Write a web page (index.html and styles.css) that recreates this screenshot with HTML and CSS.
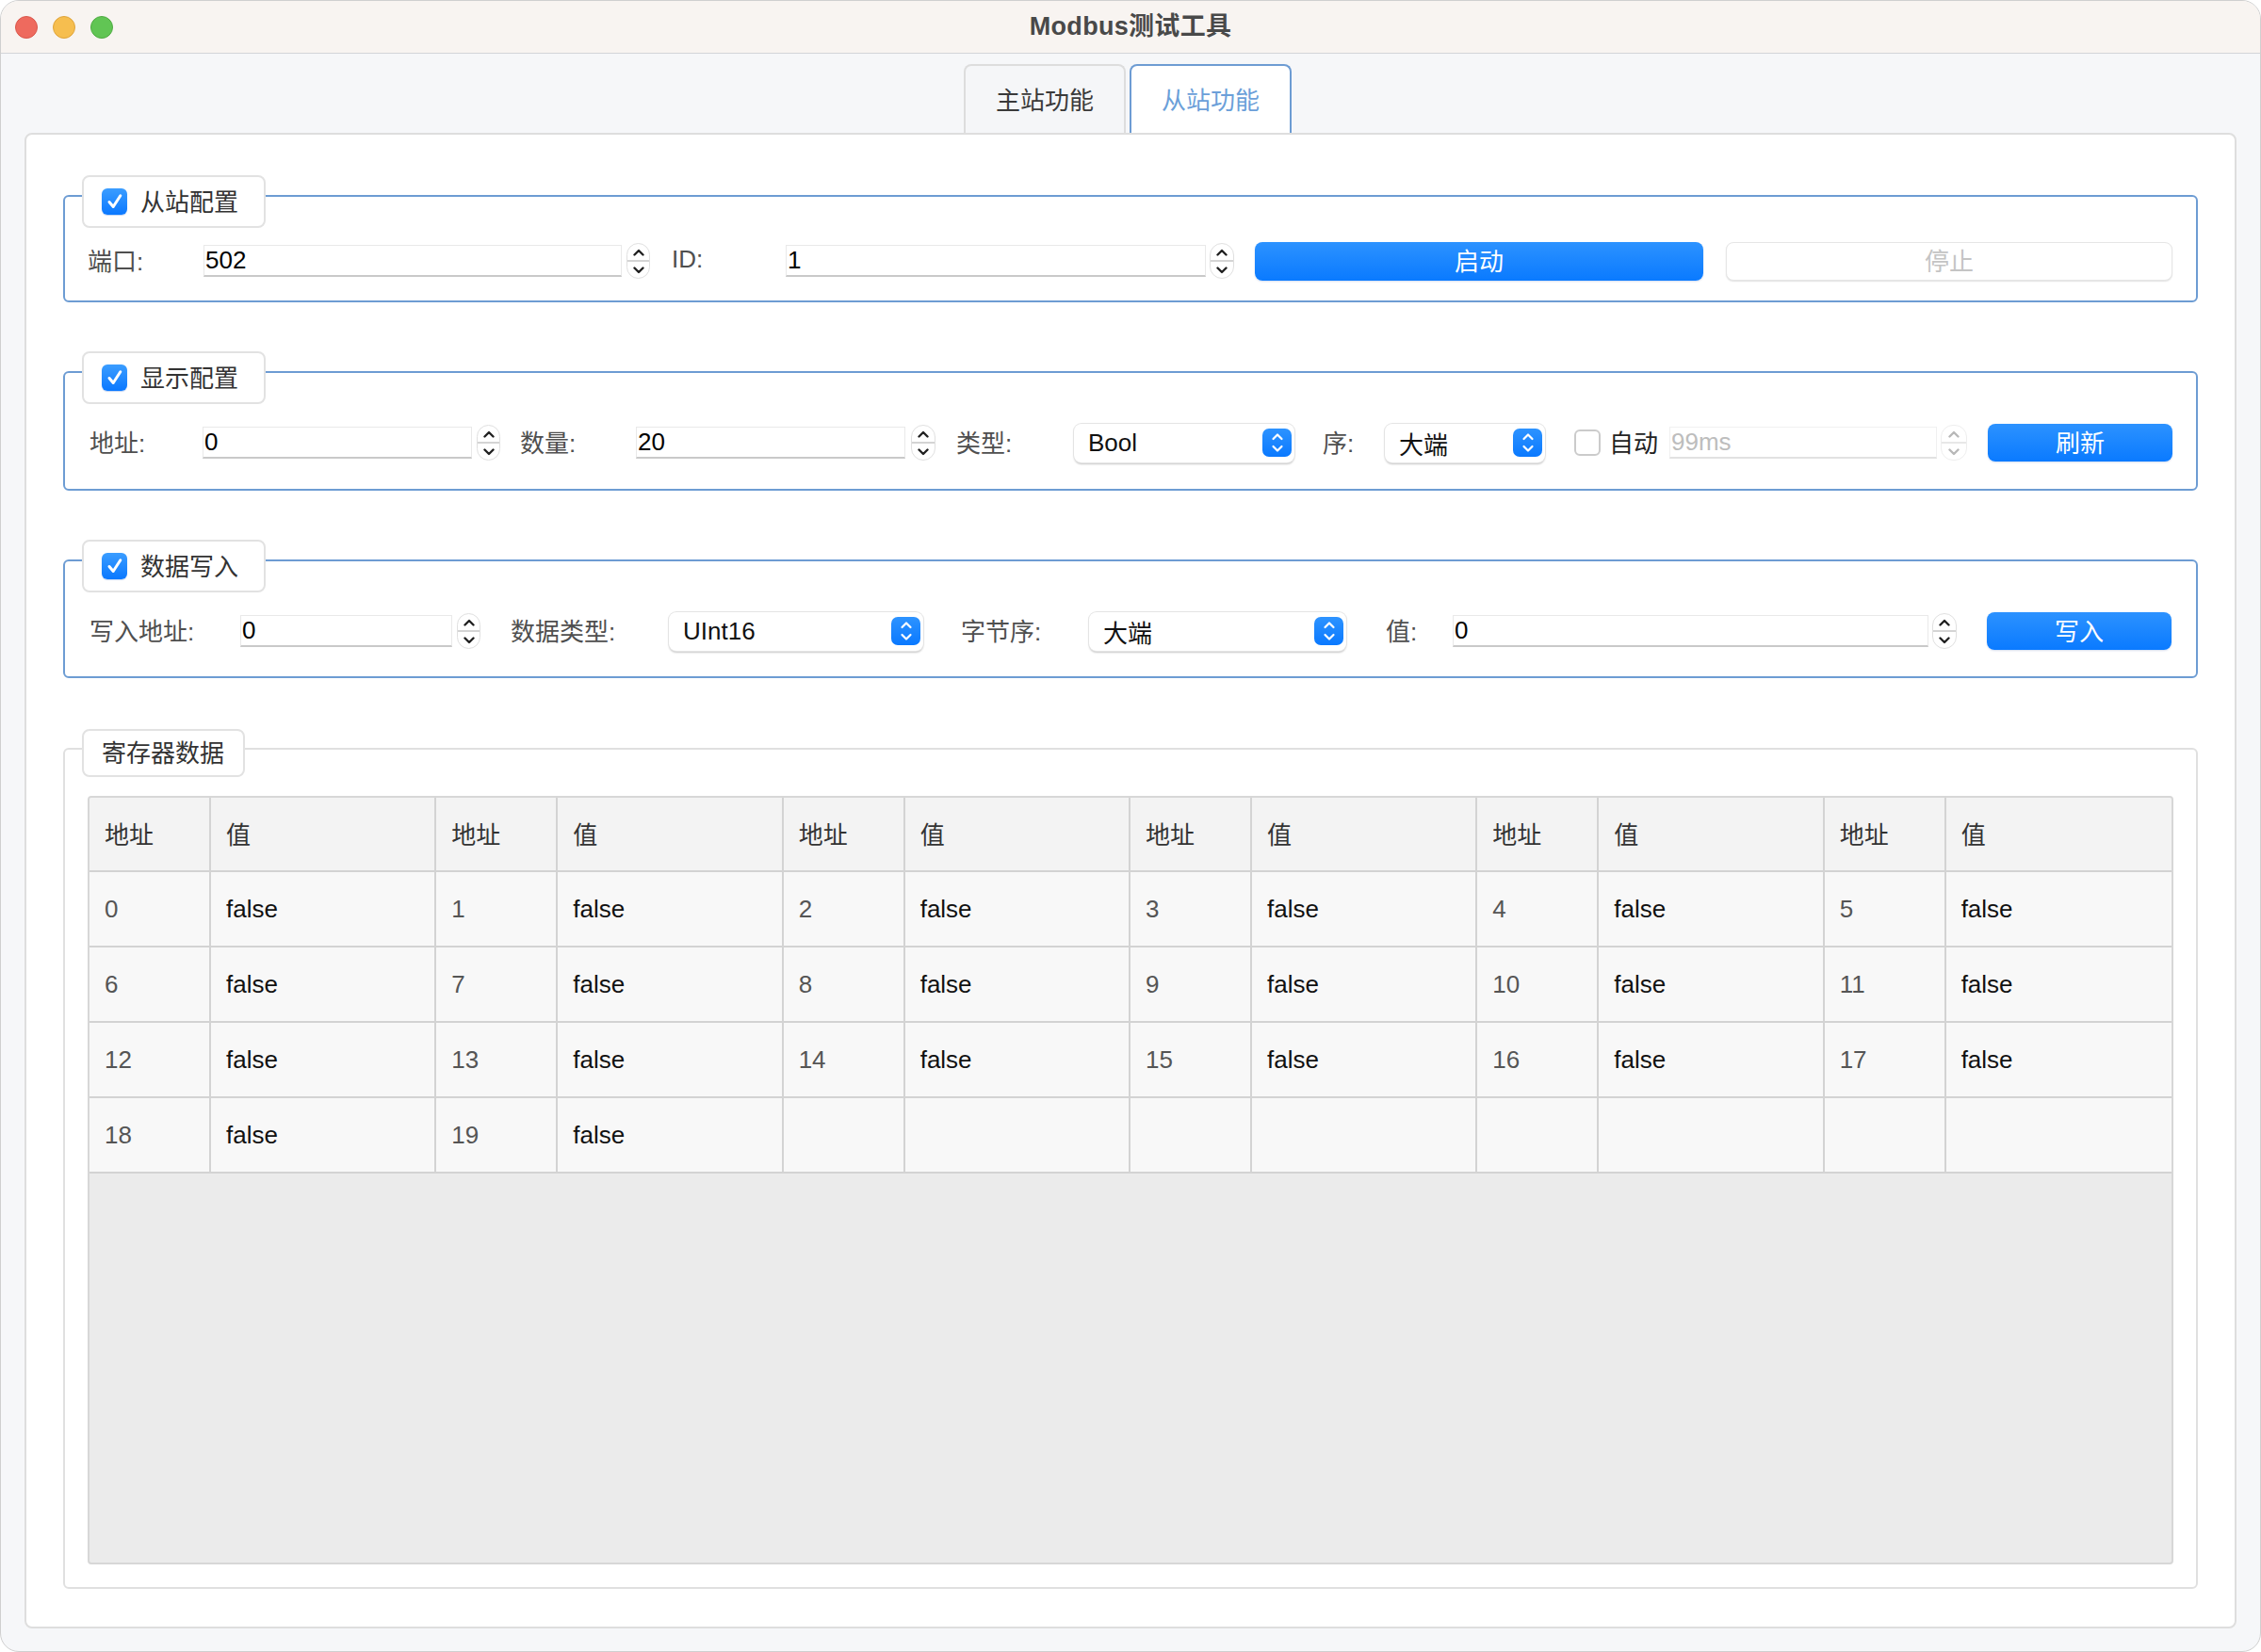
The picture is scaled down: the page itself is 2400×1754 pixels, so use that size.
FILE: index.html
```html
<!DOCTYPE html>
<html lang="zh-CN">
<head>
<meta charset="utf-8">
<title>Modbus测试工具</title>
<link rel="stylesheet" href="styles.css">
</head>
<body>
<div class="window">
  <header class="titlebar">
    <div class="lights"><span class="light red"></span><span class="light yellow"></span><span class="light green"></span></div>
    <div class="title">Modbus测试工具</div>
    <div class="spacer"></div>
  </header>
  <main class="content">
    <nav class="tabs">
      <div class="tab">主站功能</div>
      <div class="tab active">从站功能</div>
    </nav>
    <section class="panel">

      <div class="group blue g1">
        <div class="legend">
          <span class="check on"><svg width="20" height="20" viewBox="0 0 20 20"><path d="M4 10.5 L8.2 15.5 L15.8 3.8" fill="none" stroke="#fff" stroke-width="3" stroke-linecap="round" stroke-linejoin="round"/></svg></span>
          <span class="ltext">从站配置</span>
        </div>
        <div class="row r1">
          <span class="label l-port">端口:</span>
          <span class="input i-port">502</span>
          <span class="spin s-a"><span class="up"><svg width="12" height="8" viewBox="0 0 12 8"><path d="M1.5 6.5 L6 2 L10.5 6.5" fill="none" stroke="currentColor" stroke-width="2.4" stroke-linecap="round" stroke-linejoin="round"/></svg></span><span class="dn"><svg width="12" height="8" viewBox="0 0 12 8"><path d="M1.5 1.5 L6 6 L10.5 1.5" fill="none" stroke="currentColor" stroke-width="2.4" stroke-linecap="round" stroke-linejoin="round"/></svg></span></span>
          <span class="label l-id">ID:</span>
          <span class="input i-id">1</span>
          <span class="spin s-b"><span class="up"><svg width="12" height="8" viewBox="0 0 12 8"><path d="M1.5 6.5 L6 2 L10.5 6.5" fill="none" stroke="currentColor" stroke-width="2.4" stroke-linecap="round" stroke-linejoin="round"/></svg></span><span class="dn"><svg width="12" height="8" viewBox="0 0 12 8"><path d="M1.5 1.5 L6 6 L10.5 1.5" fill="none" stroke="currentColor" stroke-width="2.4" stroke-linecap="round" stroke-linejoin="round"/></svg></span></span>
          <span class="btn b-start">启动</span>
          <span class="btn disabled b-stop">停止</span>
        </div>
      </div>

      <div class="group blue g2">
        <div class="legend">
          <span class="check on"><svg width="20" height="20" viewBox="0 0 20 20"><path d="M4 10.5 L8.2 15.5 L15.8 3.8" fill="none" stroke="#fff" stroke-width="3" stroke-linecap="round" stroke-linejoin="round"/></svg></span>
          <span class="ltext">显示配置</span>
        </div>
        <div class="row r2">
          <span class="label l-addr">地址:</span>
          <span class="input i-addr">0</span>
          <span class="spin s-a"><span class="up"><svg width="12" height="8" viewBox="0 0 12 8"><path d="M1.5 6.5 L6 2 L10.5 6.5" fill="none" stroke="currentColor" stroke-width="2.4" stroke-linecap="round" stroke-linejoin="round"/></svg></span><span class="dn"><svg width="12" height="8" viewBox="0 0 12 8"><path d="M1.5 1.5 L6 6 L10.5 1.5" fill="none" stroke="currentColor" stroke-width="2.4" stroke-linecap="round" stroke-linejoin="round"/></svg></span></span>
          <span class="label l-count">数量:</span>
          <span class="input i-count">20</span>
          <span class="spin s-c"><span class="up"><svg width="12" height="8" viewBox="0 0 12 8"><path d="M1.5 6.5 L6 2 L10.5 6.5" fill="none" stroke="currentColor" stroke-width="2.4" stroke-linecap="round" stroke-linejoin="round"/></svg></span><span class="dn"><svg width="12" height="8" viewBox="0 0 12 8"><path d="M1.5 1.5 L6 6 L10.5 1.5" fill="none" stroke="currentColor" stroke-width="2.4" stroke-linecap="round" stroke-linejoin="round"/></svg></span></span>
          <span class="label l-type">类型:</span>
          <span class="combo c-bool"><span>Bool</span><span class="carrow"><svg width="14" height="26" viewBox="0 0 14 26"><path d="M2.5 9 L7 4.5 L11.5 9 M2.5 17 L7 21.5 L11.5 17" fill="none" stroke="#fff" stroke-width="2.2" stroke-linecap="round" stroke-linejoin="round"/></svg></span></span>
          <span class="label l-order">序:</span>
          <span class="combo c-order"><span>大端</span><span class="carrow"><svg width="14" height="26" viewBox="0 0 14 26"><path d="M2.5 9 L7 4.5 L11.5 9 M2.5 17 L7 21.5 L11.5 17" fill="none" stroke="#fff" stroke-width="2.2" stroke-linecap="round" stroke-linejoin="round"/></svg></span></span>
          <span class="check off"></span>
          <span class="label l-auto">自动</span>
          <span class="input dim i-ms">99ms</span>
          <span class="spin dim s-d"><span class="up"><svg width="12" height="8" viewBox="0 0 12 8"><path d="M1.5 6.5 L6 2 L10.5 6.5" fill="none" stroke="currentColor" stroke-width="2.4" stroke-linecap="round" stroke-linejoin="round"/></svg></span><span class="dn"><svg width="12" height="8" viewBox="0 0 12 8"><path d="M1.5 1.5 L6 6 L10.5 1.5" fill="none" stroke="currentColor" stroke-width="2.4" stroke-linecap="round" stroke-linejoin="round"/></svg></span></span>
          <span class="btn small b-refresh">刷新</span>
        </div>
      </div>

      <div class="group blue g3">
        <div class="legend">
          <span class="check on"><svg width="20" height="20" viewBox="0 0 20 20"><path d="M4 10.5 L8.2 15.5 L15.8 3.8" fill="none" stroke="#fff" stroke-width="3" stroke-linecap="round" stroke-linejoin="round"/></svg></span>
          <span class="ltext">数据写入</span>
        </div>
        <div class="row r3">
          <span class="label l-waddr">写入地址:</span>
          <span class="input i-waddr">0</span>
          <span class="spin s-a"><span class="up"><svg width="12" height="8" viewBox="0 0 12 8"><path d="M1.5 6.5 L6 2 L10.5 6.5" fill="none" stroke="currentColor" stroke-width="2.4" stroke-linecap="round" stroke-linejoin="round"/></svg></span><span class="dn"><svg width="12" height="8" viewBox="0 0 12 8"><path d="M1.5 1.5 L6 6 L10.5 1.5" fill="none" stroke="currentColor" stroke-width="2.4" stroke-linecap="round" stroke-linejoin="round"/></svg></span></span>
          <span class="label l-dtype">数据类型:</span>
          <span class="combo c-dtype"><span>UInt16</span><span class="carrow"><svg width="14" height="26" viewBox="0 0 14 26"><path d="M2.5 9 L7 4.5 L11.5 9 M2.5 17 L7 21.5 L11.5 17" fill="none" stroke="#fff" stroke-width="2.2" stroke-linecap="round" stroke-linejoin="round"/></svg></span></span>
          <span class="label l-border">字节序:</span>
          <span class="combo c-border"><span>大端</span><span class="carrow"><svg width="14" height="26" viewBox="0 0 14 26"><path d="M2.5 9 L7 4.5 L11.5 9 M2.5 17 L7 21.5 L11.5 17" fill="none" stroke="#fff" stroke-width="2.2" stroke-linecap="round" stroke-linejoin="round"/></svg></span></span>
          <span class="label l-val">值:</span>
          <span class="input i-val">0</span>
          <span class="spin s-e"><span class="up"><svg width="12" height="8" viewBox="0 0 12 8"><path d="M1.5 6.5 L6 2 L10.5 6.5" fill="none" stroke="currentColor" stroke-width="2.4" stroke-linecap="round" stroke-linejoin="round"/></svg></span><span class="dn"><svg width="12" height="8" viewBox="0 0 12 8"><path d="M1.5 1.5 L6 6 L10.5 1.5" fill="none" stroke="currentColor" stroke-width="2.4" stroke-linecap="round" stroke-linejoin="round"/></svg></span></span>
          <span class="btn small b-write">写入</span>
        </div>
      </div>

      <div class="group gray g4">
        <div class="legend plain"><span class="ltext">寄存器数据</span></div>
        <div class="grid-wrap">
          <table class="grid">
            <colgroup>
              <col class="ca"><col><col class="ca"><col><col class="ca"><col><col class="ca"><col><col class="ca"><col><col class="ca"><col>
            </colgroup>
            <thead>
              <tr><th>地址</th><th>值</th><th>地址</th><th>值</th><th>地址</th><th>值</th><th>地址</th><th>值</th><th>地址</th><th>值</th><th>地址</th><th>值</th></tr>
            </thead>
            <tbody>
              <tr><td class="n">0</td><td class="v">false</td><td class="n">1</td><td class="v">false</td><td class="n">2</td><td class="v">false</td><td class="n">3</td><td class="v">false</td><td class="n">4</td><td class="v">false</td><td class="n">5</td><td class="v">false</td></tr>
              <tr><td class="n">6</td><td class="v">false</td><td class="n">7</td><td class="v">false</td><td class="n">8</td><td class="v">false</td><td class="n">9</td><td class="v">false</td><td class="n">10</td><td class="v">false</td><td class="n">11</td><td class="v">false</td></tr>
              <tr><td class="n">12</td><td class="v">false</td><td class="n">13</td><td class="v">false</td><td class="n">14</td><td class="v">false</td><td class="n">15</td><td class="v">false</td><td class="n">16</td><td class="v">false</td><td class="n">17</td><td class="v">false</td></tr>
              <tr><td class="n">18</td><td class="v">false</td><td class="n">19</td><td class="v">false</td><td></td><td></td><td></td><td></td><td></td><td></td><td></td><td></td></tr>
            </tbody>
          </table>
        </div>
      </div>

    </section>
  </main>
</div>
</body>
</html>
```
FILE: styles.css
```css
* { box-sizing: border-box; margin: 0; padding: 0; }
html, body { width: 2400px; height: 1754px; background: #ffffff; overflow: hidden; }
body {
  font-family: "Liberation Sans", "Noto Sans CJK SC", sans-serif;
  font-size: 26px;
  color: #333;
}
.window {
  width: 2400px; height: 1754px;
  border-radius: 20px;
  overflow: hidden;
  background: #f6f7f9;
  display: flex; flex-direction: column;
  border: 1px solid #cfcfcf;
}
.titlebar {
  flex: none; height: 56px;
  background: #f8f4f1;
  border-bottom: 1px solid #d3d4d8;
  display: grid; grid-template-columns: 1fr auto 1fr; align-items: center;
}
.lights { display: flex; gap: 16px; padding-left: 15px; padding-top: 1px; }
.light { width: 24px; height: 24px; border-radius: 50%; }
.red { background: #ee6a5e; border: 1px solid #d9574c; }
.yellow { background: #f6be4f; border: 1px solid #dea33a; }
.green { background: #61c554; border: 1px solid #4faa42; }
.title { font-weight: bold; font-size: 27px; color: #494949; letter-spacing: 0.3px; padding-bottom: 6px; }

.content { flex: 1; display: flex; flex-direction: column; padding: 11px 25px 24px; }
.tabs { flex: none; height: 73px; display: flex; justify-content: center; gap: 4px; padding-right: 6px; }
.tab {
  width: 172px; height: 73px;
  border: 2px solid #dddddd; border-bottom: none;
  border-radius: 8px 8px 0 0;
  background: #f5f6f8;
  display: flex; align-items: center; justify-content: center;
  padding-bottom: 2px;
  color: #3a3a3a; font-size: 26px;
}
.tab.active { background: #ffffff; border-color: #6d9cd3; color: #6b9fd9; }

.panel {
  flex: 1;
  background: #ffffff;
  border: 2px solid #dedede;
  border-radius: 8px;
  padding: 64px 39px 40px;
  display: flex; flex-direction: column;
}
.group { border: 2px solid #e0e0e0; border-radius: 6px; }
.group.blue { border-color: #6d9cd3; }
.g1 { padding-bottom: 21px; }
.g2 { margin-top: 73px; padding-bottom: 28px; }
.g3 { margin-top: 73px; padding-bottom: 27px; }
.g4 { margin-top: 74px; flex: 1; display: flex; flex-direction: column; }

.legend {
  width: max-content; height: 56px;
  margin: -23px 0 0 18px;
  padding: 0 27px 0 19px;
  background: #ffffff;
  border: 2px solid #e2e2e2;
  border-radius: 8px;
  display: flex; align-items: center; gap: 14px;
  color: #333;
}
.legend .ltext { padding-bottom: 4px; }
.legend.plain { height: 51px; margin-top: -22px; padding: 0 20px 0 19px; }

.check { flex: none; width: 27px; height: 28px; border-radius: 6px; display: flex; align-items: center; justify-content: center; }
.check.on { background: linear-gradient(#3b9dff, #0a78ff); box-shadow: 0 1px 1px rgba(0,80,200,.25); }
.check.off { width: 28px; background: #fff; border: 2px solid #cbcbcb; margin-left: 31px; }

.row { height: 42px; display: flex; align-items: center; }
.r1 { margin-top: 14px; padding-left: 24px; }
.r2, .r3 { margin-top: 20px; padding-left: 26px; }

.label { flex: none; color: #4f4f4f; white-space: nowrap; padding-bottom: 3px; }
.input {
  flex: none; height: 34px;
  background: #fff;
  border: 1px solid #e9e9e9;
  border-bottom: 2px solid #c9c9c9;
  padding-left: 1px;
  color: #000;
  display: flex; align-items: center;
}
.input.dim { color: #bdbdbd; border-color: #f0f0f0; border-bottom-color: #e2e2e2; }

.spin {
  flex: none; width: 26px; height: 38px;
  border: 1px solid #e0e0e0; border-radius: 13px;
  background: #fff;
  display: flex; flex-direction: column;
  color: #222;
  overflow: hidden;
}
.spin .up, .spin .dn { flex: 1; display: flex; align-items: center; justify-content: center; }
.spin .up { border-bottom: 2px solid #d4d4d4; }
.spin.dim { color: #b8b8b8; border-color: #eeeeee; }
.spin.dim .up { border-bottom-color: #e8e8e8; }

.combo {
  flex: none; height: 41px;
  background: #fff;
  border-radius: 8px;
  box-shadow: 0 0 0 1px #e4e4e4, 0 1.5px 2px rgba(0,0,0,.22);
  display: flex; align-items: center; justify-content: space-between;
  padding: 0 3px 0 15px;
  color: #111;
}
.carrow {
  width: 31px; height: 30px; border-radius: 7px;
  background: linear-gradient(#2d93ff, #0a79ff);
  display: flex; align-items: center; justify-content: center;
}

.btn {
  flex: none; height: 41px;
  border-radius: 8px;
  background: linear-gradient(#2c92ff, #0a7aff);
  color: #fff;
  display: flex; align-items: center; justify-content: center;
  padding-bottom: 3px;
  box-shadow: 0 1px 2px rgba(0,60,160,.18);
}
.btn.small { height: 40px; }
.btn.disabled { background: #fff; color: #c4c4c4; border: 1px solid #e6e6e6; box-shadow: 0 1px 1.5px rgba(0,0,0,.12); }

/* row 1 sizes */
.l-port { width: 123px; }
.i-port { width: 444px; }
.s-a { margin-left: 5px; width: 25px; }
.l-id { width: 121px; margin-left: 23px; }
.i-id { width: 446px; }
.s-b { margin-left: 4px; }
.b-start { width: 476px; margin-left: 22px; }
.b-stop { width: 474px; margin-left: 24px; }

/* row 2 sizes */
.l-addr { width: 120px; }
.i-addr { width: 286px; }
.l-count { width: 123px; margin-left: 21px; }
.i-count { width: 286px; }
.s-c { margin-left: 6px; }
.l-type { width: 125px; margin-left: 22px; }
.c-bool { width: 234px; }
.l-order { width: 66px; margin-left: 30px; }
.c-order { width: 170px; }
.l-auto { width: 64px; margin-left: 9px; color: #222; }
.i-ms { width: 284px; }
.s-d { margin-left: 4px; width: 28px; }
.b-refresh { width: 196px; margin-left: 22px; }

/* row 3 sizes */
.l-waddr { width: 160px; }
.i-waddr { width: 225px; }
.l-dtype { width: 168px; margin-left: 32px; }
.c-dtype { width: 270px; }
.l-border { width: 136px; margin-left: 40px; }
.c-border { width: 273px; }
.l-val { width: 71px; margin-left: 42px; }
.i-val { width: 505px; }
.s-e { margin-left: 4px; }
.b-write { width: 196px; margin-left: 32px; }

/* table */
.grid-wrap {
  flex: 1;
  margin: 20px 24px 24px;
  background: #ebebeb;
  border: 2px solid #d7d7d7;
  border-radius: 4px;
  overflow: hidden;
}
.grid { width: 100%; table-layout: fixed; border-collapse: separate; border-spacing: 0; }
.grid col.ca { width: 129px; }
.grid th, .grid td {
  border-right: 2px solid #d3d3d3;
  border-bottom: 2px solid #d3d3d3;
  padding: 0 0 0 16px;
  text-align: left;
  font-weight: normal;
  white-space: nowrap;
}
.grid th { padding-bottom: 3px; }
.grid th:last-child, .grid td:last-child { border-right: none; }
.grid thead tr { height: 79px; }
.grid tbody tr { height: 80px; }
.grid th { background: #f3f3f3; color: #333; }
.grid td { background: #f8f8f8; }
.grid td.n { color: #555; }
.grid td.v { color: #111; }
```
